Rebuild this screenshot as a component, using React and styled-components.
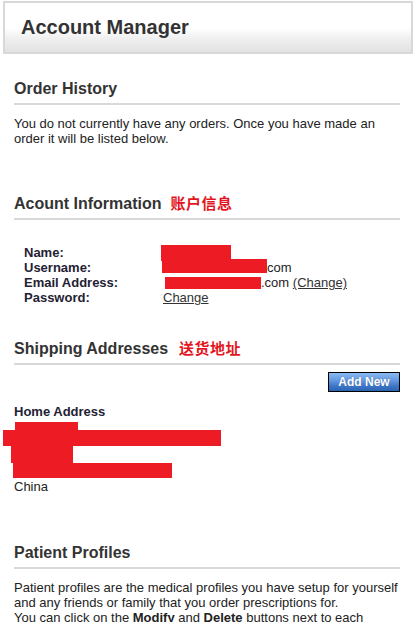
import React from "react";
import styled, { createGlobalStyle } from "styled-components";

const GlobalStyle = createGlobalStyle`
  html, body { margin: 0; padding: 0; background: #fff; overflow: hidden; }
  body {
    font-family: "Liberation Sans", Arial, "Noto Sans CJK SC", sans-serif;
    color: #222;
  }
`;

const Page = styled.div`
  width: 418px;
  height: 622px;
  overflow: hidden;
`;

const Banner = styled.header`
  box-sizing: border-box;
  margin: 1px 0 0 3px;
  width: 410px;
  height: 53px;
  border: 2px solid #d8d8d8;
  background: linear-gradient(to bottom, #ffffff 0%, #ffffff 52%, #f0f0f0 72%, #e2e2e2 100%);
  padding: 12px 0 0 16px;
`;

const Title = styled.h1`
  margin: 0;
  font-size: 20px;
  line-height: 24px;
  font-weight: bold;
  color: #333;
`;

const Main = styled.main`
  padding: 0 18px 0 14px;
`;

const Section = styled.section`
  margin-top: ${(p) => p.$top}px;
`;

const Heading = styled.h2`
  margin: 0;
  font-size: 16px;
  line-height: 20px;
  font-weight: bold;
  color: #333;
  padding-bottom: 4px;
  border-bottom: 2px solid #d9d9d9;
`;

const Note = styled.span`
  margin-left: ${(p) => p.$gap}px;
  font-family: "Noto Sans CJK SC", sans-serif;
  font-size: 15px;
  line-height: 1;
  font-weight: bold;
  color: #e3161f;
  letter-spacing: 0.5px;
`;

const Text = styled.p`
  margin: 11px 0 0;
  font-size: 13px;
  line-height: 15px;
  color: #222;
  white-space: ${(p) => (p.$nowrap ? "nowrap" : "normal")};
`;

const InfoGrid = styled.dl`
  margin: 25px 0 0 10px;
  display: grid;
  grid-template-columns: 139px auto;
  font-size: 13px;
  line-height: 15px;
`;

const Label = styled.dt`
  margin: 0;
  font-weight: bold;
  color: #1f2233;
`;

const Value = styled.dd`
  margin: 0;
  color: #222;
  white-space: nowrap;
`;

const Redact = styled.span`
  display: inline-block;
  vertical-align: top;
  position: relative;
  top: ${(p) => p.$dy || 0}px;
  width: ${(p) => p.$w}px;
  height: ${(p) => p.$h}px;
  margin-left: ${(p) => p.$dx || 0}px;
  margin-bottom: ${(p) => Math.min(0, 15 - p.$h)}px;
  background: #ed1c24;
`;

const Link = styled.a`
  color: #333;
  text-decoration: underline;
  cursor: pointer;
`;

const Toolbar = styled.div`
  display: flex;
  justify-content: flex-end;
  margin-top: 7px;
`;

const Button = styled.button`
  box-sizing: border-box;
  width: 72px;
  height: 20px;
  padding: 0;
  border: 1px solid #000;
  background: linear-gradient(to bottom, #8bbaf0 0%, #5f96de 45%, #3f78c8 70%, #2b63b3 100%);
  color: #fff;
  font-family: inherit;
  font-size: 12px;
  font-weight: bold;
  line-height: 18px;
  text-shadow: 0 0 1px rgba(0, 0, 40, 0.35);
  cursor: pointer;
`;

const Address = styled.div`
  position: relative;
  margin-top: 12px;
  font-size: 13px;
  line-height: 15px;
  color: #222;
`;

const AddressName = styled.div`
  font-weight: bold;
  color: #1f2233;
`;

const AddressLine = styled.div`
  height: 15px;
`;

const Cover = styled.span`
  position: absolute;
  left: ${(p) => p.$x}px;
  top: ${(p) => p.$y}px;
  width: ${(p) => p.$w}px;
  height: ${(p) => p.$h}px;
  background: #ed1c24;
`;

export default function App() {
  return (
    <Page>
      <GlobalStyle />
      <Banner>
        <Title>Account Manager</Title>
      </Banner>
      <Main>
        <Section $top={25}>
          <Heading>Order History</Heading>
          <Text>
            You do not currently have any orders. Once you have made an order it will be listed below.
          </Text>
        </Section>

        <Section $top={48}>
          <Heading>
            Acount Information<Note $gap={9}>账户信息</Note>
          </Heading>
          <InfoGrid>
            <Label>Name:</Label>
            <Value>
              <Redact $dx={-2} $w={70} $h={16} />
            </Value>
            <Label>Username:</Label>
            <Value>
              <Redact $dx={-1} $dy={-1} $w={105} $h={14} />com
            </Value>
            <Label>Email Address:</Label>
            <Value>
              <Redact $dx={2} $dy={2} $w={96} $h={12} />.com <Link>(Change)</Link>
            </Value>
            <Label>Password:</Label>
            <Value>
              <Link>Change</Link>
            </Value>
          </InfoGrid>
        </Section>

        <Section $top={34}>
          <Heading>
            Shipping Addresses<Note $gap={11}>送货地址</Note>
          </Heading>
          <Toolbar>
            <Button>Add New</Button>
          </Toolbar>
          <Address>
            <AddressName>Home Address</AddressName>
            <AddressLine />
            <AddressLine />
            <AddressLine />
            <AddressLine />
            <AddressLine>China</AddressLine>
            <Cover $x={1} $y={18} $w={63} $h={12} />
            <Cover $x={-11} $y={26} $w={218} $h={16} />
            <Cover $x={-3} $y={42} $w={62} $h={17} />
            <Cover $x={-1} $y={59} $w={159} $h={15} />
          </Address>
        </Section>

        <Section $top={49}>
          <Heading>Patient Profiles</Heading>
          <Text $nowrap>
            Patient profiles are the medical profiles you have setup for yourself
            <br />
            and any friends or family that you order prescriptions for.
            <br />
            You can click on the <b>Modify</b> and <b>Delete</b> buttons next to each
            <br />
            profile to make changes to it.
          </Text>
        </Section>
      </Main>
    </Page>
  );
}
